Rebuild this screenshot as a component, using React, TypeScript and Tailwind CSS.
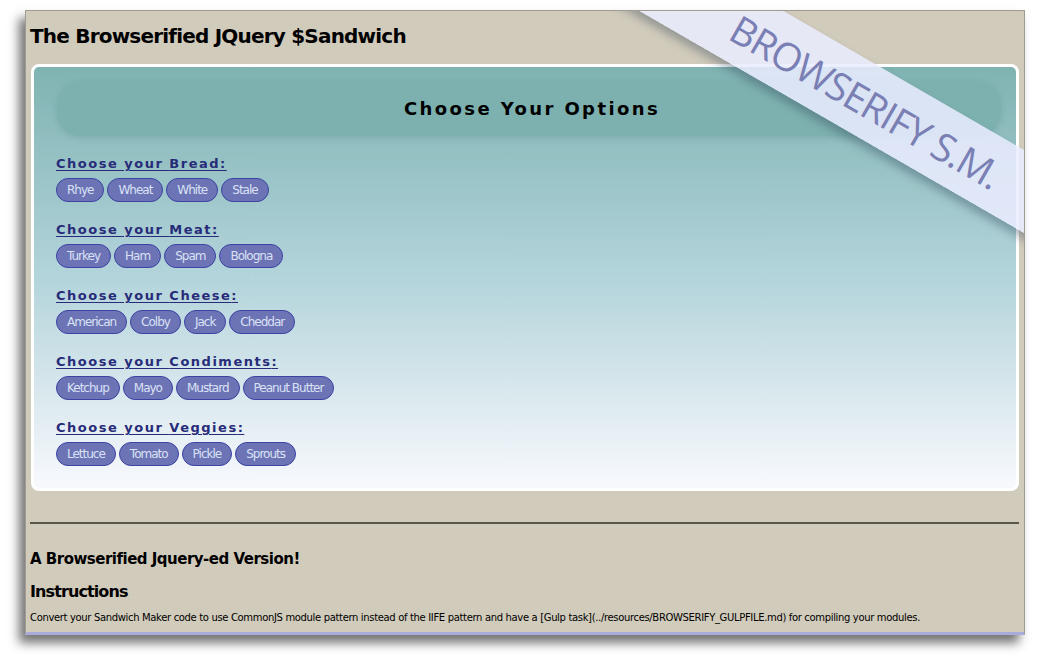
const OPTIONS = [
  { label: 'Bread', items: ['Rhye', 'Wheat', 'White', 'Stale'] },
  { label: 'Meat', items: ['Turkey', 'Ham', 'Spam', 'Bologna'] },
  { label: 'Cheese', items: ['American', 'Colby', 'Jack', 'Cheddar'] },
  { label: 'Condiments', items: ['Ketchup', 'Mayo', 'Mustard', 'Peanut Butter'] },
  { label: 'Veggies', items: ['Lettuce', 'Tomato', 'Pickle', 'Sprouts'] },
]

const FONT = "font-['DejaVu_Sans',Verdana,sans-serif]"

export default function App() {
  return (
    <div className="min-h-[661px] w-[1050px] bg-white pt-[10px] pl-[25px]">
      <div
        className={`relative h-[625px] w-[1000px] overflow-hidden border border-[#a09c92] border-b-[3px] border-b-[#a9acd9] bg-[#d1cbbb] px-[4px] text-black shadow-[-6px_8px_10px_rgba(0,0,0,0.55)] ${FONT}`}
      >
        <h1 className="mt-[13px] text-[20px] font-bold leading-[24px] tracking-[-0.8px]">
          The Browserified JQuery $Sandwich
        </h1>

        <section className="mt-[16px] ml-[1px] h-[427px] w-[988px] rounded-[8px] border-[3px] border-white bg-gradient-to-b from-[#7fb3b2] via-[#b3d4db] to-[#f8f9fd] pb-4">
          <div className="mt-[14px] ml-[23px] mr-[15px] flex h-[55px] items-center justify-center rounded-[24px] bg-[#7db1af] shadow-[0_2px_6px_rgba(60,110,110,0.2)]">
            <h2 className="pl-[6px] text-[18px] font-bold tracking-[2.4px] text-black">Choose Your Options</h2>
          </div>

          <div className="mt-[20px] ml-[22px] flex flex-col gap-[20px]">
            {OPTIONS.map((opt) => (
              <div key={opt.label}>
                <h3 className="text-[13px] font-bold leading-[16px] tracking-[1.5px] text-[#272b79] underline underline-offset-[2px]">
                  Choose your {opt.label}:
                </h3>
                <div className="mt-[6px] flex gap-[3px]">
                  {opt.items.map((it) => (
                    <button
                      key={it}
                      className="h-[24px] rounded-full border border-[#3d43a3] bg-[#6c74b6] px-[10px] text-[12px] leading-[22px] tracking-[-1px] text-[#dae1f4]"
                    >
                      {it}
                    </button>
                  ))}
                </div>
              </div>
            ))}
          </div>
        </section>

        <hr className="mt-[31px] w-[989px] border-t-2 border-[#5a5649]" />

        <h2 className="mt-[25px] text-[15px] font-bold leading-[20px] tracking-[-0.5px]">A Browserified Jquery-ed Version!</h2>
        <h2 className="mt-[13px] text-[16px] font-bold leading-[20px] tracking-[-0.9px]">Instructions</h2>
        <p className="mt-[9px] text-[10px] leading-[14px] tracking-[-0.34px]">
          Convert your Sandwich Maker code to use CommonJS module pattern instead of the IIFE pattern and have a
          [Gulp task](../resources/BROWSERIFY_GULPFILE.md) for compiling your modules.
        </p>

        <div className="pointer-events-none absolute left-[543px] top-[55px] flex h-[72px] w-[600px] rotate-[30deg] items-center justify-center bg-[rgba(234,236,255,0.86)] shadow-[0_6px_8px_rgba(40,60,80,0.35)]">
          <span className="pr-[6px] font-['Open_Sans',sans-serif] text-[39px] font-normal leading-none tracking-[-1.2px] text-[#7a7fb4]">
            BROWSERIFY S.M.
          </span>
        </div>
      </div>
    </div>
  )
}
